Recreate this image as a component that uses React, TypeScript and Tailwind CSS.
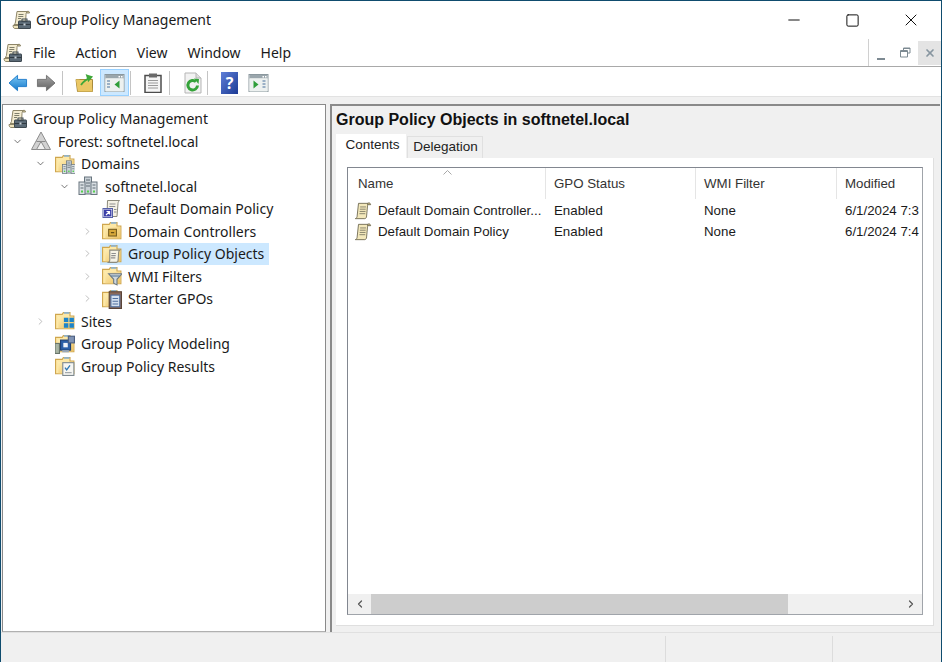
import React from 'react';
import { ChevronDown, ChevronRight, ChevronLeft, Minus, Square, X } from 'lucide-react';

const UI_FONT = "font-['Noto_Sans','Open_Sans',sans-serif]";
const LIST_FONT = "font-['Liberation_Sans',sans-serif]";

const Defs = () => (
  <svg width="0" height="0" className="block h-0 w-0">
    <defs>
      <linearGradient id="fold" x1="0" y1="0" x2="1" y2="1">
        <stop offset="0" stopColor="#fff2bd" />
        <stop offset="1" stopColor="#eec363" />
      </linearGradient>
      <linearGradient id="blueArrow" x1="0" y1="0" x2="0" y2="1">
        <stop offset="0" stopColor="#7cc8f5" />
        <stop offset="1" stopColor="#1377c9" />
      </linearGradient>
      <linearGradient id="grayArrow" x1="0" y1="0" x2="0" y2="1">
        <stop offset="0" stopColor="#a8a8a8" />
        <stop offset="1" stopColor="#5f5f5f" />
      </linearGradient>
    </defs>
  </svg>
);

const Folder = ({ children }: { children?: React.ReactNode }) => (
  <svg width="20" height="20" viewBox="1 1.500 18 18" className="-ml-[1px] mr-[1px] shrink-0">
    <path d="M1.500 4.500h6l1-1.500h6v3h3.500v11.500h-16.500z" fill="#fde8a6" stroke="#cfa64e" />
    <path d="M2.500 5.500c1.500 1 1.500 3 1.500 5v6.500h13.500v-10h-13z" fill="url(#fold)" />
    <rect x="9" y="2.500" width="5" height="1.500" fill="#8fb2cf" />
    {children}
  </svg>
);

const Scroll = ({ size = 20 }: { size?: number }) => (
  <svg width={size} height={size} viewBox="0 0 20 20" className="shrink-0">
    <path d="M5 1.500h12c-1.500 1-2 2-2 3l-1 11c0 1.500-.8 3-2 3h-10.500c1.300-.7 2-1.500 2-3z" fill="#f3e8bb" stroke="#6f6a52" />
    <path d="M6.800 5.500h6.500M6.500 8h6.500M6.300 10.500h6.500M6 13h6.500" stroke="#7f7c66" strokeWidth="1" />
    <path d="M15 1.500c1.800-.8 3.500-.3 3.500 1.500h-3.500z" fill="#d8c78e" stroke="#6f6a52" />
  </svg>
);

const GpmIcon = () => (
  <svg width="20" height="20" viewBox="0 0 20 20" className="shrink-0">
    <path d="M5 1.500h10.500c-1.300 1-1.500 2-1.500 3l-.5 10h-11.500c1-.7 1.500-1.500 1.500-2.500z" fill="#f4ecd0" stroke="#8e8668" />
    <path d="M1 15.500h8v3h-6c-1 0-2-1-2-3z" fill="#efe4bd" stroke="#8e8668" />
    <path d="M15 1.500c1.500-.6 2.500 0 2.500 1.500h-3z" fill="#d8caa0" stroke="#8e8668" />
    <path d="M6.500 4.500h5M6.300 6.500h5M6 8.500h3" stroke="#7f7f6c" />
    <rect x="6.500" y="11" width="12" height="7.500" rx=".5" fill="#5b6a76" stroke="#3d4850" />
    <rect x="10" y="9" width="5" height="2.500" fill="none" stroke="#3d4850" />
    <rect x="6.500" y="14" width="12" height="1" fill="#303a42" />
    <rect x="11.500" y="13.500" width="2" height="2" fill="#c9d3da" />
  </svg>
);

const Forest = () => (
  <svg width="20" height="20" viewBox="0 0 20 20" className="-ml-[2px] mr-[2px] shrink-0">
    <path d="M10 1 L19.500 18.500 H.5 Z" fill="#d2d2d2" stroke="#8c8c8c" />
    <path d="M5.500 10.500h9" stroke="#8c8c8c" fill="none" />
    <path d="M10 10.500l-4.500 8h9z" fill="#f1f1f1" stroke="#8c8c8c" />
  </svg>
);

const Servers = ({ x = 0, y = 0, scale = 1 }: { x?: number; y?: number; scale?: number }) => (
  <g transform={`translate(${x} ${y}) scale(${scale})`}>
    <rect x="6.500" y="1" width="7" height="17" fill="#c8d0d6" stroke="#68757e" />
    <rect x="1" y="6" width="6" height="12.500" fill="#d9dfe3" stroke="#68757e" />
    <rect x="13" y="6" width="6" height="12.500" fill="#d9dfe3" stroke="#68757e" />
    <path d="M8 4h4M8 7h4M8 10h4M2.500 9h3M2.500 12h3M14.500 9h3M14.500 12h3" stroke="#5e6b74" />
    <rect x="3" y="14.500" width="2" height="2" fill="#55d04e" />
    <rect x="9" y="14.500" width="2" height="2" fill="#55d04e" />
    <rect x="15" y="14.500" width="2" height="2" fill="#55d04e" />
  </g>
);

const DomainIcon = () => (
  <svg width="20" height="20" viewBox="0 0 20 20" className="-ml-[2px] mr-[2px] shrink-0">
    <Servers />
  </svg>
);

const ShortcutPolicy = () => (
  <svg width="20" height="20" viewBox="0 0 20 20" className="-ml-[1px] mr-[1px] shrink-0">
    <path d="M5.500 1.500h12c-1 1-1.500 1.800-1.500 3l-1 13h-10z" fill="#f4f1e4" stroke="#8c8a7c" />
    <path d="M7.500 5h6M7.300 7.500h6M12 10.500h2.500M12 13h2.500" stroke="#8f8f8f" />
    <rect x="1" y="9.500" width="9.500" height="9" fill="#fff" stroke="#5560a8" />
    <rect x="2" y="10.500" width="7.500" height="7" fill="#3b3fa8" />
    <path d="M4 16l3-3M4.500 12.500h3v3" stroke="#fff" fill="none" strokeWidth="1.200" />
  </svg>
);

const GpoFolderBadge = () => (
  <g>
    <path d="M8 7h9c-.8.600-1 1.200-1 2l-.5 7c0 1-.5 2-1.500 2h-7c.8-.5 1-1.200 1-2z" fill="#f6f3e6" stroke="#8c8a7c" />
    <path d="M9.500 10h4M9.300 12h4M9 14h4" stroke="#8f8f8f" />
  </g>
);

const Arrow = ({ dir, fill, stroke }: { dir: 'l' | 'r'; fill: string; stroke: string }) => (
  <svg width="20" height="18" viewBox="0 0 22 20" className="shrink-0">
    <path
      d={dir === 'l' ? 'M1 10 L10.500 1.500 V6 H20.500 V14 H10.500 V18.500 Z' : 'M21 10 L11.500 1.500 V6 H1.500 V14 H11.500 V18.500 Z'}
      fill={fill}
      stroke={stroke}
    />
  </svg>
);

const PaneIcon = ({ side }: { side: 'l' | 'r' }) => (
  <svg width="21" height="18" viewBox="0 0 20 18" className="shrink-0">
    <rect x=".5" y=".5" width="19" height="17" fill="#fff" stroke="#8b989e" />
    <rect x="1" y="1" width="18" height="3.500" fill="#9aa6ac" />
    <rect x="14" y="2" width="1.500" height="1.500" fill="#fff" />
    <rect x="16.500" y="2" width="1.500" height="1.500" fill="#fff" />
    <rect x="1" y="4.500" width="18" height="13" fill="#edf1f0" />
    {side === 'l' ? (
      <>
        <path d="M2.500 7h3M2.500 10h3M2.500 13h3" stroke="#7f9bb8" strokeWidth="1.500" />
        <path d="M15 6.500v8l-5-4z" fill="#2f9e3a" />
      </>
    ) : (
      <>
        <path d="M5 6.500v8l5-4z" fill="#2f9e3a" />
        <path d="M14 7h3M14 10h3M14 13h3" stroke="#7f9bb8" strokeWidth="1.500" />
      </>
    )}
  </svg>
);

const Toolbar = () => (
  <div className="flex h-[29px] shrink-0 items-center bg-white pl-[7px] pt-[2px]">
    <Arrow dir="l" fill="url(#blueArrow)" stroke="#1a78c8" />
    <div className="w-[8px]" />
    <Arrow dir="r" fill="url(#grayArrow)" stroke="#6e6e6e" />
    <div className="ml-[6px] h-[24px] w-px bg-[#c4c4c4]" />
    <svg width="22" height="22" viewBox="0 0 22 22" className="ml-[11px] shrink-0">
      <path d="M2 7.500h16.500v12h-15z" fill="#f0cd6e" stroke="#a88a3c" />
      <path d="M2 7.500l2 12h14.500l-1-9h-11l-1-3z" fill="#eac765" />
      <path d="M7 13c2-3 5-6 9-7M13 3.500l4.500 1.500-3 3.500z" stroke="#3fa83a" strokeWidth="1.800" fill="#3fa83a" />
    </svg>
    <div className="ml-[4px] flex h-[27px] w-[29px] items-center justify-center border border-[#99d1ff] bg-[#cce8ff]">
      <PaneIcon side="l" />
    </div>
    <div className="ml-[1px] h-[24px] w-px bg-[#c4c4c4]" />
    <svg width="18" height="20" viewBox="0 0 18 20" className="ml-[13px] shrink-0">
      <rect x="1" y="2.500" width="16" height="17" fill="#f5f5f5" stroke="#4c4c4c" strokeWidth="1.500" />
      <rect x="5" y=".5" width="8" height="4" fill="#6a6a6a" />
      <path d="M4 7.500h10M4 10h10M4 12.500h10M4 15h10" stroke="#9a9a9a" />
    </svg>
    <div className="ml-[7px] h-[24px] w-px bg-[#c4c4c4]" />
    <svg width="18" height="22" viewBox="0 0 18 22" className="ml-[14px] shrink-0">
      <path d="M1 1h11l5 5v15h-16z" fill="#f2f2f2" stroke="#b5b5b5" />
      <path d="M12 1v5h5" fill="#dedede" stroke="#b5b5b5" />
      <path d="M13.500 13.500a4.800 4.800 0 1 1-1.500-3.800" fill="none" stroke="#35a33a" strokeWidth="3" />
      <path d="M10 6.500l5 .5-.5 5z" fill="#35a33a" />
    </svg>
    <div className="ml-[5px] h-[24px] w-px bg-[#c4c4c4]" />
    <div className={`ml-[13px] flex h-[22px] w-[17px] shrink-0 items-center justify-center bg-gradient-to-br from-[#5f7fd8] to-[#1c3a94] text-[16px] font-bold text-white ${UI_FONT}`}>?</div>
    <div className="ml-[10px]">
      <PaneIcon side="r" />
    </div>
  </div>
);

type Node = {
  label: string;
  level: number;
  caret?: 'open' | 'closed';
  icon: React.ReactNode;
  selected?: boolean;
};

const nodes: Node[] = [
  { label: 'Group Policy Management', level: 0, icon: <GpmIcon /> },
  { label: 'Forest: softnetel.local', level: 1, caret: 'open', icon: <Forest /> },
  {
    label: 'Domains',
    level: 2,
    caret: 'open',
    icon: (
      <Folder>
        <Servers x={7} y={7} scale={0.65} />
      </Folder>
    ),
  },
  { label: 'softnetel.local', level: 3, caret: 'open', icon: <DomainIcon /> },
  { label: 'Default Domain Policy', level: 4, icon: <ShortcutPolicy /> },
  {
    label: 'Domain Controllers',
    level: 4,
    caret: 'closed',
    icon: (
      <Folder>
        <rect x="7" y="9" width="7" height="6" fill="#d9a93a" stroke="#7a6020" />
        <path d="M9 12h3" stroke="#5a4510" />
      </Folder>
    ),
  },
  {
    label: 'Group Policy Objects',
    level: 4,
    caret: 'closed',
    selected: true,
    icon: (
      <Folder>
        <GpoFolderBadge />
      </Folder>
    ),
  },
  {
    label: 'WMI Filters',
    level: 4,
    caret: 'closed',
    icon: (
      <Folder>
        <path d="M7 8.500h12l-4.500 5v5l-3-1.500v-3.500z" fill="#cfd8de" stroke="#6e7a82" />
        <path d="M9 10.500h8" stroke="#5b7a96" />
      </Folder>
    ),
  },
  {
    label: 'Starter GPOs',
    level: 4,
    caret: 'closed',
    icon: (
      <Folder>
        <rect x="7.500" y="4" width="11" height="15" fill="#8c6a58" stroke="#5a4438" />
        <rect x="9" y="7" width="8" height="10.500" fill="#d4e0ef" stroke="#4f6f9f" />
        <path d="M10.500 10h5M10.500 12.500h5M10.500 15h5" stroke="#4f6f9f" />
      </Folder>
    ),
  },
  {
    label: 'Sites',
    level: 2,
    caret: 'closed',
    icon: (
      <Folder>
        <path d="M9 7.500h4v4h-4zM14 7.500h4v4h-4zM9 12.500h4v4h-4zM14 12.500h4v4h-4z" fill="#1d84c9" />
      </Folder>
    ),
  },
  {
    label: 'Group Policy Modeling',
    level: 2,
    icon: (
      <Folder>
        <rect x="1" y="10" width="4" height="9" fill="#a9b5a4" stroke="#69756a" />
        <rect x="6" y="7" width="9" height="9" fill="#2b5fa8" stroke="#1d3f74" />
        <rect x="8.500" y="9.500" width="4" height="4" fill="#eef3fa" />
        <rect x="13" y="3.500" width="5.500" height="6" fill="#7f93b4" stroke="#4c5f80" />
        <rect x="7.500" y="16" width="6" height="2" fill="#9aa8b8" />
      </Folder>
    ),
  },
  {
    label: 'Group Policy Results',
    level: 2,
    icon: (
      <Folder>
        <rect x="8" y="7.500" width="10" height="11.500" fill="#f6f6f2" stroke="#7f8a90" />
        <path d="M10 12l1.500 2 3-4" stroke="#2f77b5" fill="none" strokeWidth="1.200" />
        <path d="M10 16.500h6" stroke="#9aa0a4" />
      </Folder>
    ),
  },
];

// left padding per tree depth, so chevrons and labels land on the same columns
const levelClass = ['pl-[1px]', 'pl-[6px]', 'pl-[29px]', 'pl-[53px]', 'pl-[76px]'];

const TreeRow = ({ node }: { node: Node }) => (
  <div className={`flex h-[22.5px] items-center ${levelClass[node.level]}`}>
    {node.level > 0 && (
      <span className="mr-[4px] flex w-[16px] shrink-0 justify-center">
        {node.caret === 'open' && <ChevronDown size={11} strokeWidth={1.6} className="text-[#444]" />}
        {node.caret === 'closed' && <ChevronRight size={11} strokeWidth={1.6} className="text-[#a6a6a6]" />}
      </span>
    )}
    <div className={`ml-[1px] flex h-[22.5px] items-center pl-[3px] pr-[5px] ${node.selected ? 'bg-[#cce8ff]' : ''}`}>
      {node.icon}
      <span className={`ml-[5px] whitespace-nowrap text-[14px] text-[#1a1a1a] ${UI_FONT}`}>{node.label}</span>
    </div>
  </div>
);

const columns = [
  { label: 'Name', width: 'w-[198px]', pad: 'pl-[10px]' },
  { label: 'GPO Status', width: 'w-[150px]', pad: 'pl-[8px]' },
  { label: 'WMI Filter', width: 'w-[141px]', pad: 'pl-[8px]' },
  { label: 'Modified', width: 'flex-1', pad: 'pl-[8px]' },
];

const rows = [
  { name: 'Default Domain Controller...', status: 'Enabled', wmi: 'None', modified: '6/1/2024 7:37 AM' },
  { name: 'Default Domain Policy', status: 'Enabled', wmi: 'None', modified: '6/1/2024 7:41 AM' },
];

const GpoList = () => (
  <div className="flex min-h-0 flex-1 flex-col border border-[#828790] border-r-[#a0a4aa] border-b-[#a0a4aa] bg-white">
    <div className={`relative flex h-[31px] shrink-0 text-[13.3px] text-[#333] ${LIST_FONT}`}>
      {columns.map((c, i) => (
        <div key={c.label} className={`flex items-end pb-[5px] ${c.width} ${c.pad} ${i < 3 ? 'border-r border-[#e5e5e5]' : ''}`}>
          {c.label}
        </div>
      ))}
      <svg width="9" height="5" viewBox="0 0 9 5" className="absolute left-[95px] top-[2px]">
        <path d="M.5 4.500L4.500 .5l4 4" fill="none" stroke="#a8a8a8" />
      </svg>
    </div>
    <div className="flex-1 overflow-hidden pt-[1px]">
      {rows.map((r) => (
        <div key={r.name} className={`flex h-[21px] items-center whitespace-nowrap text-[13.3px] text-[#1a1a1a] ${LIST_FONT}`}>
          <div className="flex w-[198px] shrink-0 items-center overflow-hidden pl-[6px]">
            <Scroll size={18} />
            <span className="ml-[6px]">{r.name}</span>
          </div>
          <div className="w-[150px] shrink-0 pl-[8px]">{r.status}</div>
          <div className="w-[141px] shrink-0 pl-[8px]">{r.wmi}</div>
          <div className="mr-[3px] ml-[8px] min-w-0 flex-1 overflow-hidden">{r.modified}</div>
        </div>
      ))}
    </div>
    <div className="flex h-[20px] shrink-0 items-center bg-[#f0f0f0]">
      <div className="flex w-[23px] justify-center">
        <ChevronLeft size={12} strokeWidth={2.4} className="text-[#555]" />
      </div>
      <div className="h-full w-[417px] bg-[#cdcdcd]" />
      <div className="flex-1" />
      <div className="flex w-[23px] justify-center">
        <ChevronRight size={12} strokeWidth={2.4} className="text-[#555]" />
      </div>
    </div>
  </div>
);

export default function App() {
  return (
    <div className="flex h-[662px] w-[942px] flex-col overflow-hidden border-x border-t border-[#0f4c6e] bg-[#f0f0f0]">
      <Defs />
      {/* title bar */}
      <div className="flex h-[38px] shrink-0 items-center bg-white pl-[11px]">
        <GpmIcon />
        <span className={`ml-[4px] pb-[2px] text-[14px] text-[#1a1a1a] ${UI_FONT}`}>Group Policy Management</span>
        <div className="ml-auto flex items-center pr-[1px] text-[#111]">
          <div className="flex w-[58px] justify-center">
            <Minus size={18} strokeWidth={1} absoluteStrokeWidth />
          </div>
          <div className="flex w-[58px] justify-center">
            <Square size={15} strokeWidth={1} absoluteStrokeWidth />
          </div>
          <div className="flex w-[59px] justify-center">
            <X size={20} strokeWidth={1} absoluteStrokeWidth />
          </div>
        </div>
      </div>
      {/* menu bar */}
      <div className="flex h-[28px] shrink-0 items-stretch border-b border-[#a9a9a9] bg-white">
        <div className="flex items-center pl-[2px]">
          <GpmIcon />
        </div>
        <div className={`flex items-center text-[14px] text-[#1a1a1a] ${UI_FONT}`}>
          <span className="ml-[10px]">File</span>
          <span className="ml-[20px]">Action</span>
          <span className="ml-[20px]">View</span>
          <span className="ml-[20px]">Window</span>
          <span className="ml-[20px]">Help</span>
        </div>
        <div className="ml-auto flex items-center gap-[2px] border-l border-[#d0d0d0] pl-[1px]">
          <div className="flex h-[24px] w-[22px] items-end justify-center pb-[5px]">
            <div className="h-[2px] w-[8px] bg-[#7d8a92]" />
          </div>
          <div className="flex h-[24px] w-[22px] items-center justify-center">
            <svg width="11" height="11" viewBox="0 0 11 11">
              <path d="M3.500 3V1h6.500v5H8M.5 3.500h7v6.500h-7zM.5 4.500h7M3.500 1.500h6.500" fill="none" stroke="#7d8a92" />
            </svg>
          </div>
          <div className="flex h-[24px] w-[23px] items-center justify-center bg-[#e4e4e4]">
            <X size={12} strokeWidth={3.4} className="text-[#8796a0]" />
          </div>
        </div>
      </div>
      <Toolbar />
      <div className="h-[8px] shrink-0 border-t border-[#e2e2e2]" />
      {/* panes */}
      <div className="flex min-h-0 flex-1 px-[1px]">
        <div className="w-[324px] shrink-0 border border-[#8a8a8a] border-b-[#b0b0b0] bg-white pt-[2.5px]">
          {nodes.map((n) => (
            <TreeRow key={n.label} node={n} />
          ))}
        </div>
        <div className="ml-[4px] flex min-w-0 flex-1 flex-col border-l-2 border-t-2 border-[#8a8a8a] pl-[3px]">
          <div className={`ml-[1px] pt-[4px] text-[16px] font-bold leading-[20px] text-[#111] ${LIST_FONT}`}>
            Group Policy Objects in softnetel.local
          </div>
          <div className={`ml-[1px] mt-[4px] flex h-[24px] shrink-0 items-end text-[13.5px] text-[#222] ${LIST_FONT}`}>
            <div className="flex h-[24px] w-[70px] items-center justify-center bg-white pb-[1px] pl-[3px]">Contents</div>
            <div className="ml-[1px] flex h-[22px] w-[76px] items-center justify-center border border-b-0 border-[#e0e0e0] bg-[#f0f0f0] pl-[1px]">Delegation</div>
          </div>
          <div className="mb-[6px] ml-[1px] mr-[6px] flex min-h-0 flex-1 flex-col border-b border-r border-[#dfdfdf] bg-white pb-[10px] pl-[11px] pr-[10px] pt-[9px]">
            <GpoList />
          </div>
        </div>
      </div>
      {/* status bar */}
      <div className="flex h-[30px] shrink-0 justify-end border-t border-[#e0e0e0] pt-[3px]">
        <div className="w-[167px] border-l border-[#dcdcdc]" />
        <div className="w-[109px] border-l border-[#dcdcdc]" />
      </div>
    </div>
  );
}
